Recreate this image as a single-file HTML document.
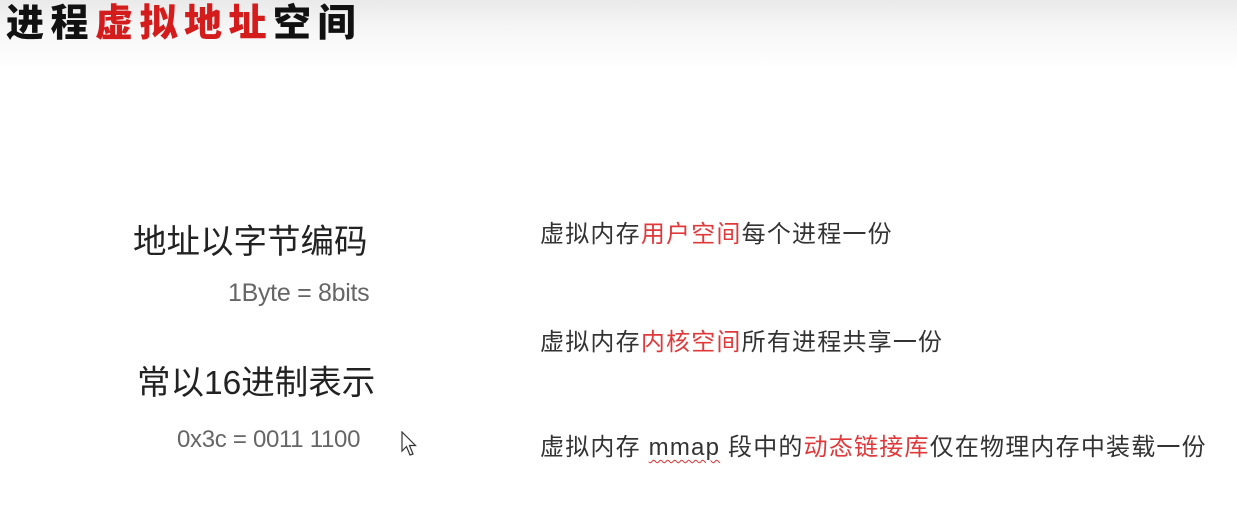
<!DOCTYPE html>
<html><head><meta charset="utf-8"><style>
html,body{margin:0;padding:0;}
body{width:1237px;height:509px;overflow:hidden;position:relative;background:#fff;font-family:"Liberation Sans","Noto Sans CJK SC",sans-serif;}
.hdr{position:absolute;left:0;top:0;width:1237px;height:70px;background:linear-gradient(#e9e9e9,#f6f6f6 40%,#fff);}
.title{position:absolute;left:6px;top:-1px;font-family:"Noto Sans CJK SC",sans-serif;font-weight:900;font-size:38px;letter-spacing:6.5px;color:#111;line-height:42px;white-space:nowrap;}
.r{color:#d41c1c;}
.t{position:absolute;white-space:nowrap;color:#333;}
.big{font-size:33.5px;color:#222;}
.mid{font-size:24px;color:#666;letter-spacing:-0.3px;}
.rt{font-size:24px;color:#333;letter-spacing:1.2px;}
.rr{color:#e0393b;}
.wavy{text-decoration:underline wavy #e03030;text-decoration-thickness:1px;text-underline-offset:4px;}
</style></head><body>
<div class="hdr"></div>
<div class="title">进程<span class="r">虚拟地址</span>空间</div>
<div class="t big" style="left:133px;top:214px;">地址以字节编码</div>
<div class="t mid" style="left:228px;top:279px;font-size:25px;">1Byte = 8bits</div>
<div class="t big" style="left:137px;top:355px;">常以16进制表示</div>
<div class="t mid" style="left:177px;top:426px;">0x3c = 0011 1100</div>
<div class="t rt" style="left:540px;top:214px;">虚拟内存<span class="rr">用户空间</span>每个进程一份</div>
<div class="t rt" style="left:540px;top:322px;">虚拟内存<span class="rr">内核空间</span>所有进程共享一份</div>
<div class="t rt" style="left:540px;top:427px;">虚拟内存 <span class="wavy">mmap</span> 段中的<span class="rr">动态链接库</span>仅在物理内存中装载一份</div>
<svg style="position:absolute;left:401px;top:431px" width="18" height="28" viewBox="0 0 18 28"><path d="M1 1 L1 20 L5.5 15.5 L9 24 L12 23 L8.5 14.5 L14.5 14.5 Z" fill="#fff" stroke="#333" stroke-width="1.2"/></svg>
</body></html>
